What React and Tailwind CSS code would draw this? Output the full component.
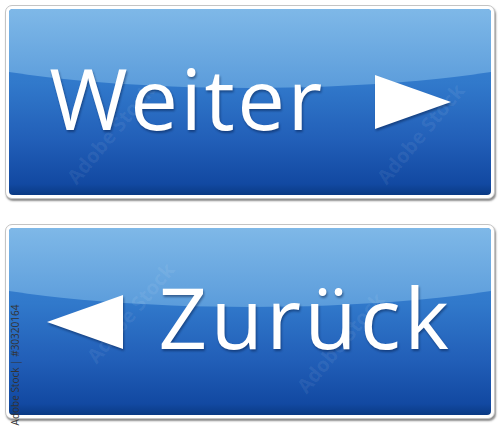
import React from "react";

// Glossy blue navigation buttons
function Arrow({ dir }) {
  const pts = dir === "right" ? "0,0 76,27 0,54" : "76,0 0,27 76,54";
  return (
    <svg
      width="76"
      height="54"
      viewBox="0 0 76 54"
      className="relative z-10 shrink-0 drop-shadow-[1px_2px_1px_rgba(0,20,60,0.45)]"
    >
      <polygon points={pts} fill="#ffffff" />
    </svg>
  );
}

// faint diagonal stock watermark
function Mark({ className }) {
  return (
    <span
      className={`pointer-events-none absolute z-20 whitespace-nowrap font-['Open_Sans',sans-serif] text-[20px] font-bold text-white/[0.08] ${className}`}
    >
      Adobe Stock
    </span>
  );
}

function GlossButton({ children, className }) {
  return (
    <div
      className={`rounded-[7px] border border-[#c4c4c4] bg-white p-[3px] shadow-[1px_2px_2px_rgba(0,0,0,0.45)] ${className}`}
    >
      <div className="relative flex h-full items-center justify-center overflow-hidden rounded-[4px] bg-[linear-gradient(to_bottom,#3d88d3_0%,#3179cb_40%,#225fb8_70%,#1249a2_94%,#0a3a84_100%)]">
        <div className="pointer-events-none absolute left-[-159px] top-[-79px] h-[158px] w-[800px] rounded-[50%] bg-[linear-gradient(to_bottom,#82bbe9_45%,#5b9cdb_100%)]" />
        {children}
      </div>
    </div>
  );
}

const label =
  "relative z-10 font-['Open_Sans',sans-serif] text-[85px] leading-none text-white drop-shadow-[1px_2px_1px_rgba(0,20,60,0.45)]";

export default function App() {
  return (
    <div className="relative flex h-[433px] w-[500px] flex-col gap-[25px] overflow-hidden bg-white px-[5px] pt-[5px]">
      <GlossButton className="h-[194px]">
        <span className={`${label} mr-[50px] mt-[-10px] tracking-[2.5px]`}>Weiter</span>
        <Arrow dir="right" />
        <Mark className="left-[40px] top-[110px] -rotate-[50deg]" />
        <Mark className="left-[350px] top-[110px] -rotate-[50deg]" />
      </GlossButton>
      <GlossButton className="h-[195px]">
        <Arrow dir="left" />
        <span className={`${label} ml-[35px] mt-[-10px] tracking-[3.5px]`}>Zurück</span>
        <Mark className="left-[60px] top-[70px] -rotate-[50deg]" />
        <Mark className="left-[270px] top-[100px] -rotate-[50deg]" />
      </GlossButton>
      <span className="pointer-events-none absolute left-[-45px] top-[360px] -rotate-90 whitespace-nowrap font-['Open_Sans',sans-serif] text-[10px] leading-none text-[#333]">
        Adobe Stock | #30320164
      </span>
    </div>
  );
}
